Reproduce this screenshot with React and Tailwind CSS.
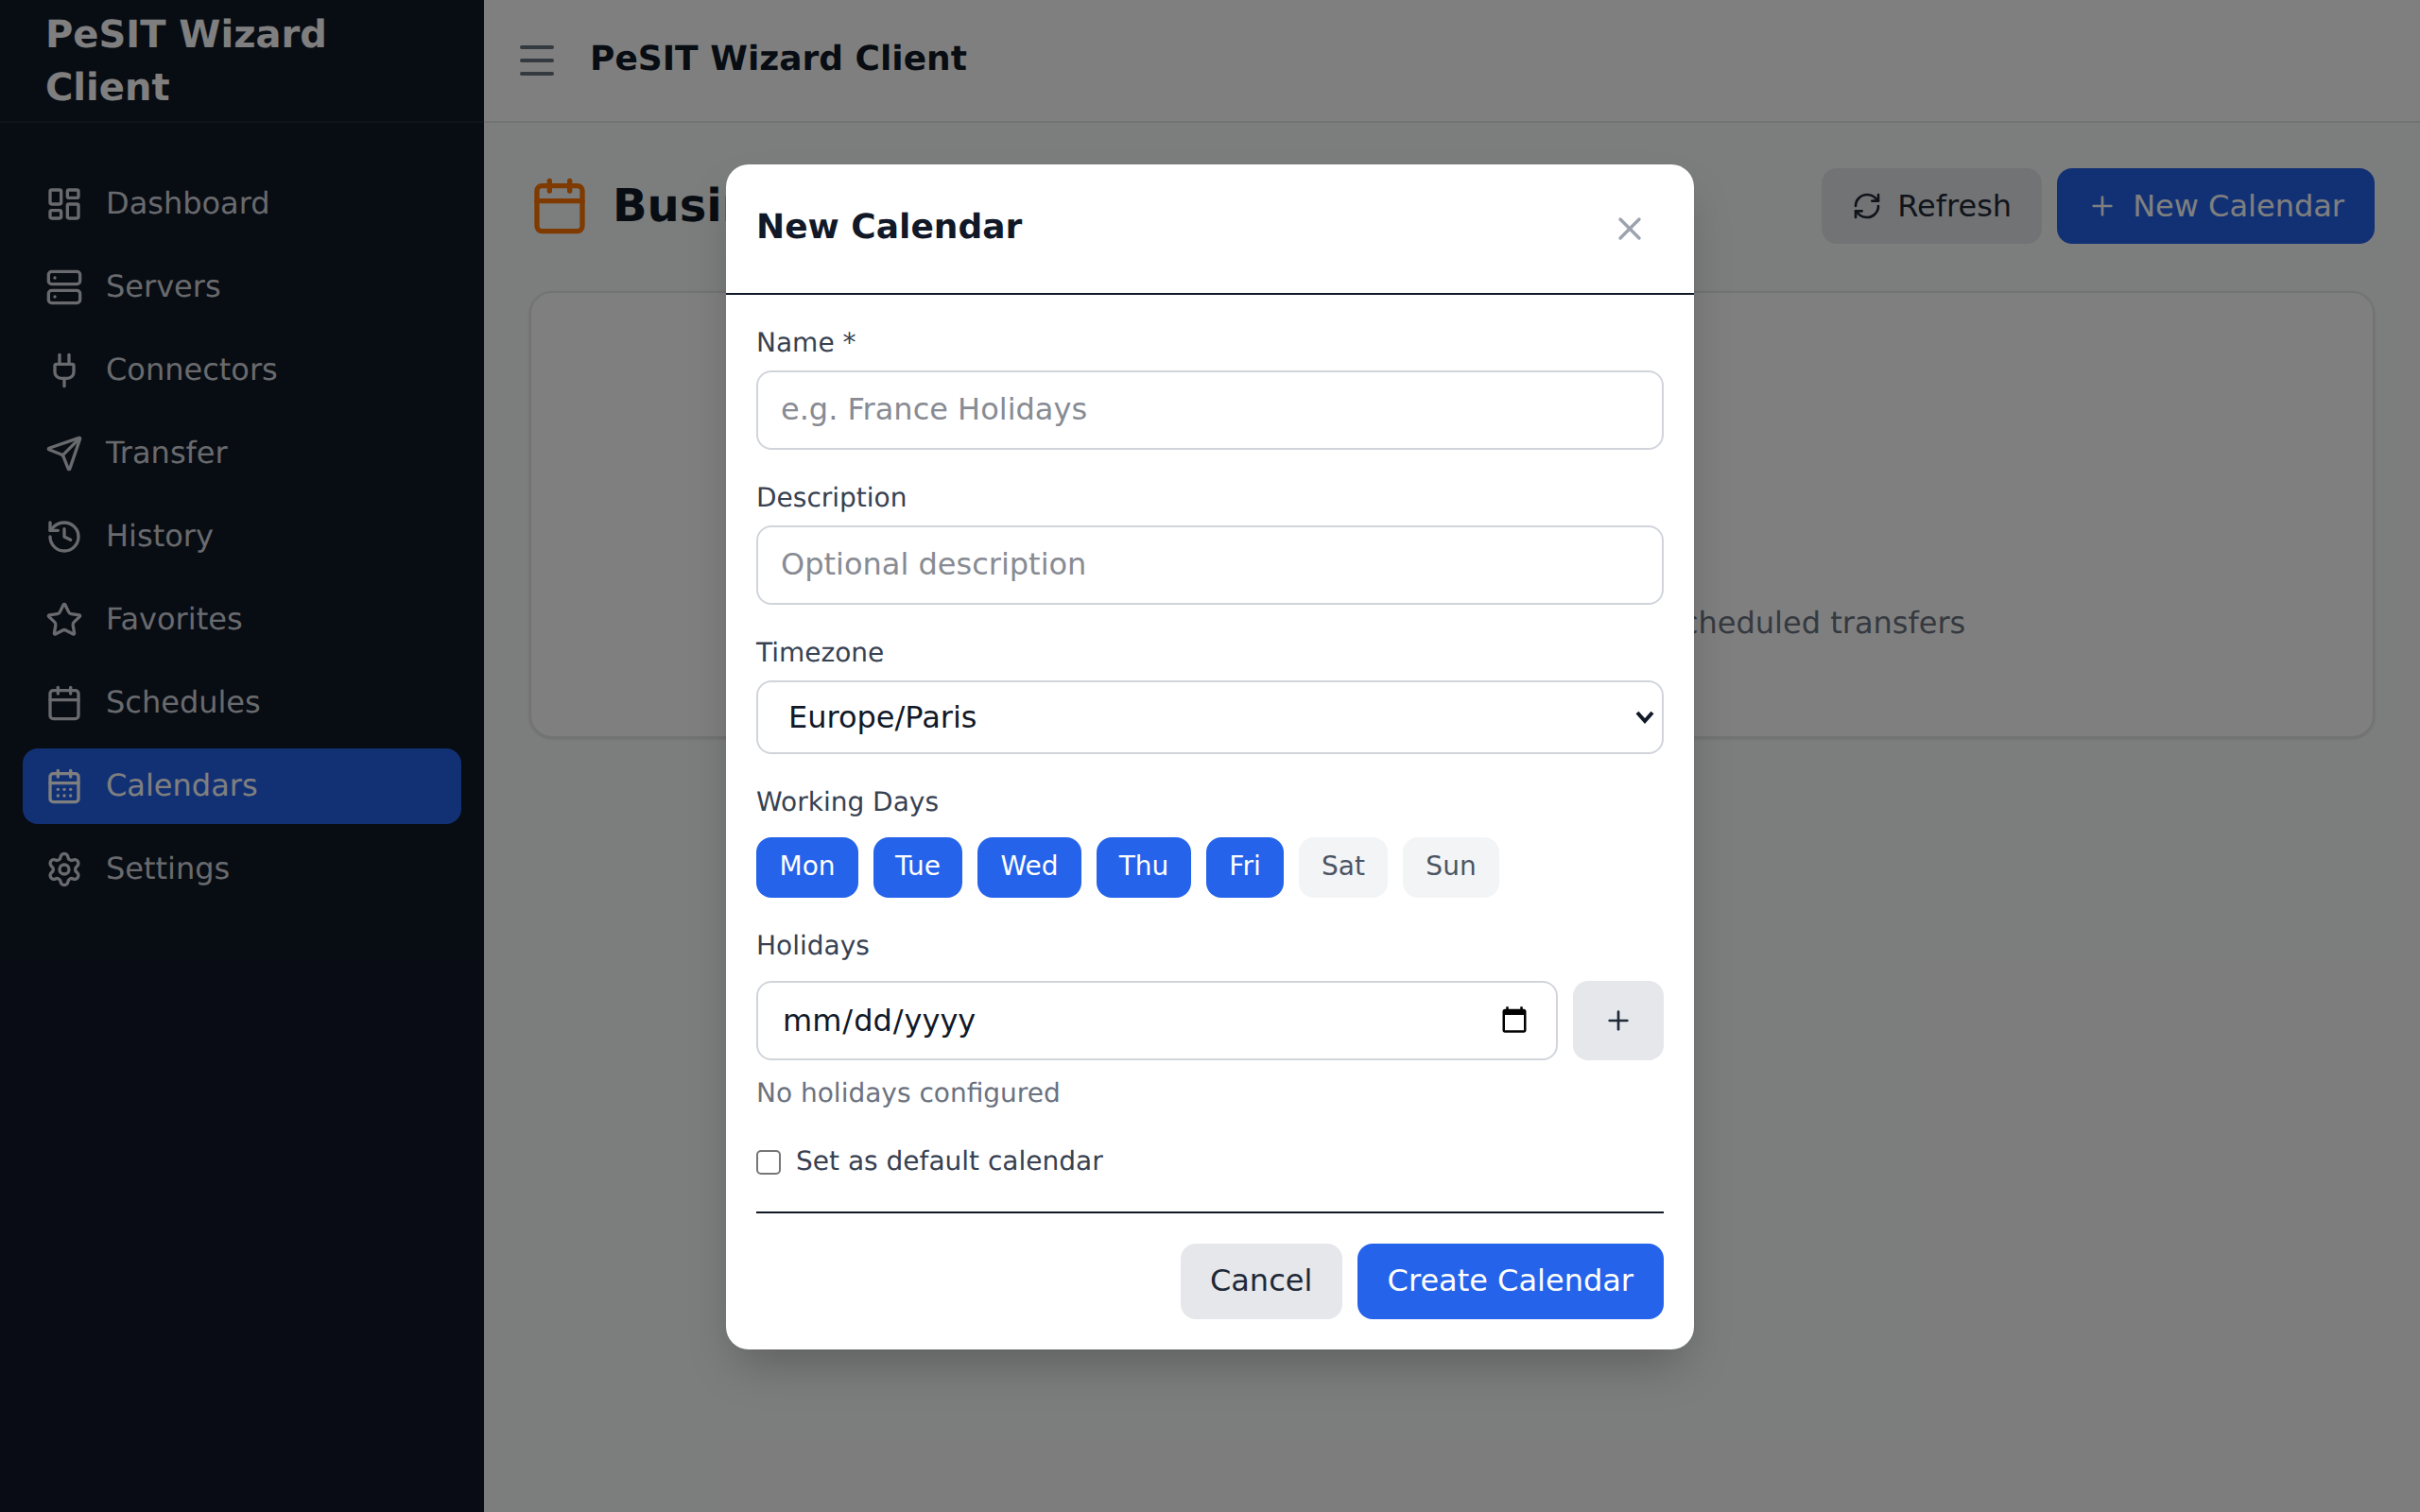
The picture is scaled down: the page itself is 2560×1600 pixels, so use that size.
import React from "react";
import { LayoutDashboard, Server, Plug, Send, History, Star, Calendar, CalendarDays, Settings, Menu, RefreshCw, Plus, X } from "lucide-react";

const nav = [
  ["Dashboard", LayoutDashboard],
  ["Servers", Server],
  ["Connectors", Plug],
  ["Transfer", Send],
  ["History", History],
  ["Favorites", Star],
  ["Schedules", Calendar],
  ["Calendars", CalendarDays, true],
  ["Settings", Settings],
];

const days = [
  ["Mon", 1, "w-[108px]"],
  ["Tue", 1, "w-[94px]"],
  ["Wed", 1, "w-[110px]"],
  ["Thu", 1, "w-[100px]"],
  ["Fri", 1, "w-[82px]"],
  ["Sat", 0, "w-[94px]"],
  ["Sun", 0, "w-[102px]"],
];

const inputCls =
  "block w-full h-[84px] rounded-[16px] border-2 border-[#d1d5db] bg-white px-[24px] text-[32px] text-[#111827] placeholder:text-[#888b93] outline-none";

function Label({ children, className = "" }) {
  return <label className={"block text-[28px] leading-[38px] font-medium text-[#374151] " + className}>{children}</label>;
}

export default function App() {
  return (
    <div className="relative flex h-[1600px] w-[2560px] overflow-hidden bg-[#f9fafb] font-['DejaVu_Sans',sans-serif] [text-rendering:geometricPrecision]">
      <aside className="flex w-[512px] shrink-0 flex-col bg-[#111827]">
        <div className="flex h-[130px] shrink-0 items-center border-b-2 border-[#1f2937] px-[48px]">
          <div className="pt-[2px] text-[40px] font-bold leading-[56px] text-white">PeSIT Wizard Client</div>
        </div>
        <nav className="flex flex-col gap-[8px] px-[24px] pt-[46px]">
          {nav.map(([name, Icon, active]) => (
            <div
              key={name}
              className={
                "flex h-[80px] items-center gap-[24px] rounded-[16px] px-[24px] text-[32px] " +
                (active ? "bg-[#2563eb] text-white" : "text-[#d1d5db]")
              }
            >
              <Icon size={40} strokeWidth={2} />
              <span className="pb-[2px]">{name}</span>
            </div>
          ))}
        </nav>
      </aside>

      <div className="flex min-w-0 flex-1 flex-col">
        <header className="flex h-[130px] shrink-0 items-center gap-[32px] border-b-2 border-[#e5e7eb] bg-white px-[32px]">
          <Menu size={48} strokeWidth={2} className="text-[#6b7280]" />
          <div className="pb-[2px] text-[36px] font-semibold leading-[56px] text-[#111827]">PeSIT Wizard Client</div>
        </header>
        <main className="flex-1 p-[48px]">
          <div className="mb-[50px] flex items-center justify-between">
            <div className="flex items-center gap-[24px]">
              <Calendar size={64} strokeWidth={2} className="text-[#ff7400]" />
              <h1 className="text-[48px] font-bold leading-[64px] text-[#111827]">Business Calendars</h1>
            </div>
            <div className="flex gap-[16px]">
              <button className="flex h-[80px] items-center gap-[16px] rounded-[16px] bg-[#e5e7eb] px-[32px] text-[32px] text-[#1f2937]">
                <RefreshCw size={32} strokeWidth={2} />
                Refresh
              </button>
              <button className="flex h-[80px] items-center gap-[16px] rounded-[16px] bg-[#2563eb] px-[32px] text-[32px] text-white">
                <Plus size={32} strokeWidth={2} />
                New Calendar
              </button>
            </div>
          </div>
          <div className="flex flex-col items-center rounded-[24px] border-2 border-[#e5e7eb] bg-white pb-[96px] pt-[97px] shadow-sm">
            <Calendar size={128} strokeWidth={2} className="mb-[32px] text-[#d1d5db]" />
            <h3 className="mb-[12px] text-[36px] font-medium leading-[56px] text-[#111827]">No calendars</h3>
            <p className="text-[32px] leading-[48px] text-[#6b7280]">Define working days and public holidays, for all scheduled transfers</p>
          </div>
        </main>
      </div>

      <div className="absolute inset-0 flex items-center justify-center bg-black/50">
        <div className="mt-[2px] w-[1024px] rounded-[24px] bg-white shadow-2xl">
          <div className="flex items-center justify-between border-b-2 border-[#111827] p-[32px]">
            <h2 className="pb-[2px] text-[36px] font-bold leading-[54px] text-[#111827]">New Calendar</h2>
            <button className="p-[16px] text-[#9ca3af]">
              <X size={40} strokeWidth={2} />
            </button>
          </div>
          <form className="flex flex-col gap-[32px] p-[32px]">
            <div>
              <Label className="mb-[10px]">Name *</Label>
              <input className={inputCls + " pb-[2px]"} placeholder="e.g. France Holidays" />
            </div>
            <div>
              <Label className="mb-[10px]">Description</Label>
              <input className={inputCls + " pb-[2px]"} placeholder="Optional description" />
            </div>
            <div>
              <Label className="mb-[10px]">Timezone</Label>
              <div className="relative">
                <select className="block h-[78px] w-full appearance-none rounded-[16px] border-2 border-[#d1d5db] bg-white px-[32px] text-[32px] text-[#111827] outline-none">
                  <option>Europe/Paris</option>
                </select>
                <svg className="pointer-events-none absolute right-[10px] top-[31px] h-[16px] w-[20px]" viewBox="0 0 20 16" fill="none" stroke="#111827" strokeWidth="4">
                  <path d="M2 3l8 9 8-9" />
                </svg>
              </div>
            </div>
            <div>
              <Label className="mb-[18px]">Working Days</Label>
              <div className="flex gap-[16px]">
                {days.map(([d, on, w]) => (
                  <button
                    key={d}
                    type="button"
                    className={
                      "h-[64px] rounded-[16px] pb-[2px] text-center text-[28px] " + w + " " +
                      (on ? "bg-[#2563eb] text-white" : "bg-[#f3f4f6] text-[#4b5563]")
                    }
                  >
                    {d}
                  </button>
                ))}
              </div>
            </div>
            <div>
              <Label className="mb-[18px]">Holidays</Label>
              <div className="flex gap-[16px]">
                <input type="date" className={inputCls + " min-w-0 flex-1 !pl-[25px] !pr-[26px]"} />
                <button type="button" className="flex h-[84px] w-[96px] items-center justify-center rounded-[16px] bg-[#e5e7eb] text-[#1f2937]">
                  <Plus size={32} strokeWidth={2} />
                </button>
              </div>
              <p className="mb-[2px] mt-[16px] text-[28px] leading-[38px] text-[#6b7280]">No holidays configured</p>
            </div>
            <label className="flex items-center gap-[16px]">
              <input type="checkbox" className="h-[26px] w-[26px] appearance-none rounded-[5px] border-2 border-[#767676] bg-white" />
              <span className="pb-[2px] text-[28px] leading-[38px] text-[#374151]">Set as default calendar</span>
            </label>
            <div className="flex justify-end gap-[16px] border-t-2 border-[#111827] pt-[32px]">
              <button type="button" className="h-[80px] w-[171px] rounded-[16px] bg-[#e5e7eb] pb-[2px] text-center text-[32px] text-[#1f2937]">Cancel</button>
              <button type="button" className="h-[80px] rounded-[16px] bg-[#2563eb] px-[32px] pb-[2px] text-[32px] text-white">Create Calendar</button>
            </div>
          </form>
        </div>
      </div>
    </div>
  );
}
